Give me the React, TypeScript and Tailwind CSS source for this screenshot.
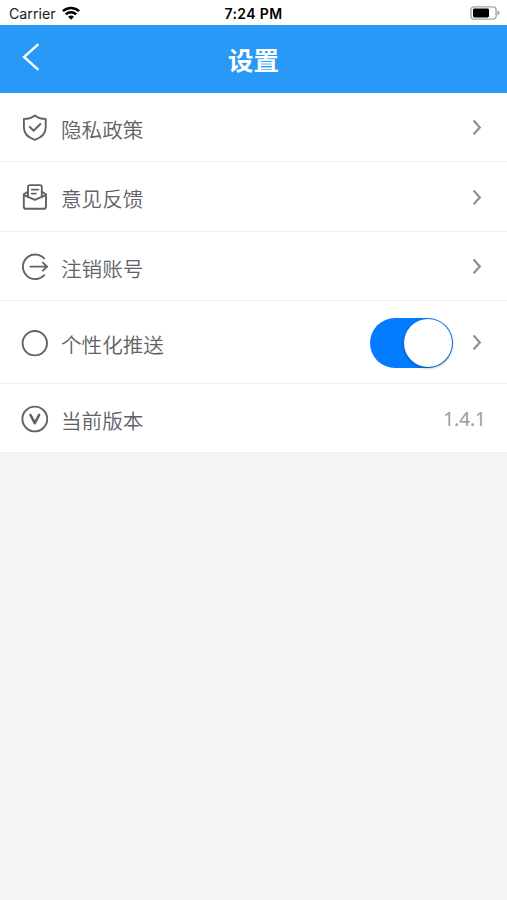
import { useState } from "react";

interface SettingItem {
    title: string;
    icon: React.ReactNode;
    rowClass: string;
    kind: "link" | "switch" | "version";
}

const iconProps = {
    className: "mt-[2px] h-7 w-7 shrink-0",
    viewBox: "0 0 28 28",
    fill: "none",
    stroke: "#606266",
    strokeWidth: 1.9,
    strokeLinecap: "round" as const,
    strokeLinejoin: "round" as const,
};

const items: SettingItem[] = [
    {
        title: "隐私政策",
        icon: (
            <svg {...iconProps}>
                <path d="M13.8 1.4 C11.3 3.5 7 4.8 2.9 4.9 V13.5 C2.9 19.8 7.4 23.7 13.8 25.8 C20.2 23.7 24.7 19.8 24.7 13.5 V4.9 C20.6 4.8 16.3 3.5 13.8 1.4 Z" />
                <path d="M8.8 13 L12.6 16.7 L19.4 10" />
            </svg>
        ),
        rowClass: "h-[69px] border-b",
        kind: "link",
    },
    {
        title: "意见反馈",
        icon: (
            <svg {...iconProps}>
                <path d="M7 13 V3 Q7 1.1 8.9 1.1 H18.9 Q20.8 1.1 20.8 3 V13" />
                <path d="M6.4 8 L2.8 10.4 V22.4 Q2.8 24.8 5.2 24.8 H22.6 Q25 24.8 25 22.4 V10.4 L21.4 8" />
                <path d="M3 11.2 L13.9 15.8 L24.8 11.2" />
                <path d="M10.8 5.6 H17.4 M10.8 9.6 H14.8" />
            </svg>
        ),
        rowClass: "h-[70px] border-b",
        kind: "link",
    },
    {
        title: "注销账号",
        icon: (
            <svg {...iconProps}>
                <path d="M23.2 5.4 A12.3 12.3 0 1 0 23.2 22.2" />
                <path d="M9.4 13.6 H26.2 M21.8 9.6 L26.2 13.6 L21.8 17.6" />
            </svg>
        ),
        rowClass: "h-[69px] border-b",
        kind: "link",
    },
    {
        title: "个性化推送",
        icon: (
            <svg {...iconProps}>
                <circle cx="13.8" cy="14.2" r="12.2" />
            </svg>
        ),
        rowClass: "h-[83px] border-b",
        kind: "switch",
    },
    {
        title: "当前版本",
        icon: (
            <svg {...iconProps}>
                <circle cx="13.8" cy="14" r="12.4" />
                <path d="M9.5 10 L13.8 18.2 L18.1 10" strokeWidth="2.6" />
            </svg>
        ),
        rowClass: "h-[69px] border-b",
        kind: "version",
    },
];

function StatusBar() {
    return (
        <div className="grid h-[25px] grid-cols-3 items-center bg-white pt-[2px] pr-[7px] pl-[9px] font-['Inter','Liberation_Sans',sans-serif] text-[14.2px] leading-none text-[#222]">
            <div className="flex items-center gap-[6px]">
                <span className="mt-px">Carrier</span>
                <svg className="-mt-px h-[14px] w-[18px]" viewBox="0 0 18 14" fill="none" stroke="#000" strokeWidth="2.5">
                    <path d="M0.9 5.1 C5.4 0.8 12.6 0.8 17.1 5.1" />
                    <path d="M3.8 8.3 C6.8 5.5 11.2 5.5 14.2 8.3" />
                    <path d="M9 13.8 L6 10.8 Q9 8.4 12 10.8 Z" fill="#000" stroke="none" />
                </svg>
            </div>
            <span className="mt-px -ml-[2px] text-center text-[14px] font-semibold tracking-[0.4px] text-black">7:24 PM</span>
            <svg className="-mt-px h-[14px] w-[30px] justify-self-end" viewBox="0 0 30 14" fill="none">
                <rect x="0.9" y="0.9" width="25.2" height="12.2" rx="3.4" stroke="#a5a5a5" strokeWidth="1.4" />
                <rect x="3" y="2.6" width="16" height="8.8" rx="1.4" fill="#000" />
                <path d="M27.4 4.6 Q29.6 5.4 29.6 7 Q29.6 8.6 27.4 9.4 Z" fill="#a5a5a5" />
            </svg>
        </div>
    );
}

function Chevron() {
    return (
        <svg className="h-4 w-[10px]" viewBox="0 0 10 16" fill="none" stroke="#8f8f94" strokeWidth="2.2">
            <path d="M1.6 1.6 L7.8 8.4 L1.6 15.2" />
        </svg>
    );
}

function Switch() {
    const [on, setOn] = useState(true);
    return (
        <button
            role="switch"
            aria-checked={on}
            aria-label="个性化推送"
            onClick={() => setOn(!on)}
            className={`mt-px flex h-[50px] w-[83px] items-center rounded-full px-px ${on ? "justify-end bg-[#047cff]" : "justify-start bg-gray-300"}`}
        >
            <span className="h-12 w-12 rounded-full bg-white shadow-[0_1px_3px_rgba(0,0,0,0.4)]" />
        </button>
    );
}

export default function App() {
    return (
        <div className="min-h-screen bg-[#f5f5f5] font-['Noto_Sans_CJK_SC',sans-serif]">
            <StatusBar />
            <header className="grid h-[68px] grid-cols-3 items-center bg-[#2999f7] px-[22px] text-white">
                <button aria-label="返回" className="mb-1">
                    <svg className="h-7 w-[18px]" viewBox="0 0 18 28" fill="none" stroke="currentColor" strokeWidth="2.4">
                        <path d="M16.4 1.2 L2 14 L16.4 26.8" />
                    </svg>
                </button>
                <h1 className="text-center text-[25.5px] leading-none font-bold">设置</h1>
            </header>

            <ul className="bg-white">
                {items.map((item) => (
                    <li key={item.title} className={`flex items-center border-[#efefef] pr-[22px] pl-[21px] ${item.rowClass}`}>
                        {item.icon}
                        <span className="mt-[4px] ml-[12px] grow text-[20.6px] leading-none font-[350] text-[#606266]">{item.title}</span>
                        {item.kind === "switch" && <Switch />}
                        {item.kind === "version" ? (
                            <span className="mt-[2px] -mr-px font-['Noto_Sans',sans-serif] text-[19px] leading-none text-[#9b9b9b]">1.4.1</span>
                        ) : (
                            <span className="ml-[19px] pr-[3px]">
                                <Chevron />
                            </span>
                        )}
                    </li>
                ))}
            </ul>
        </div>
    );
}
